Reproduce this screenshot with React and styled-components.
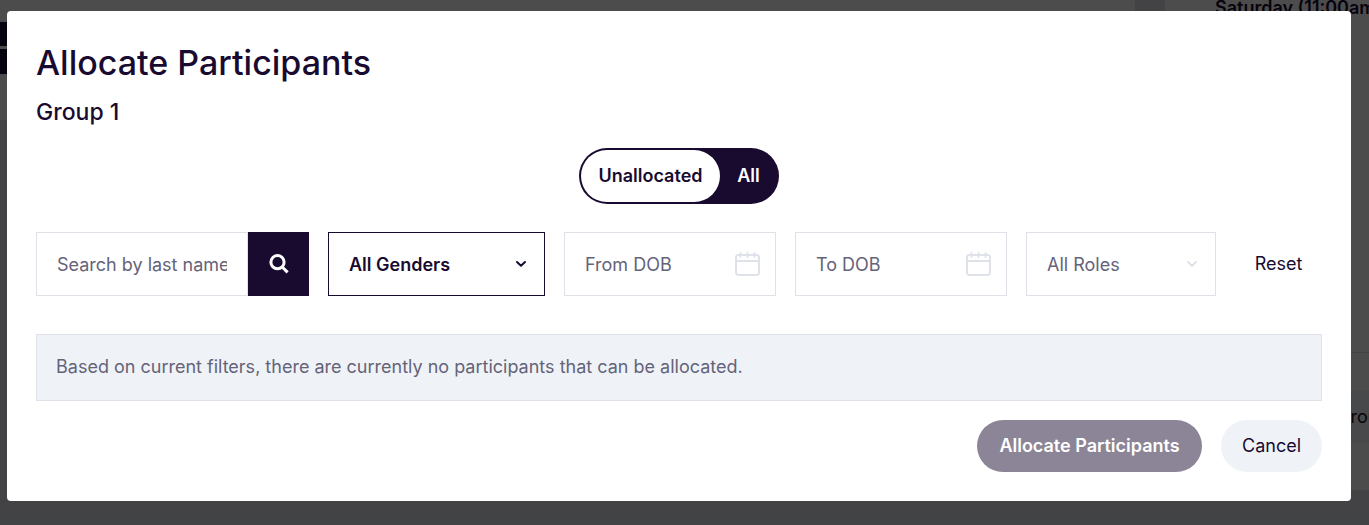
import React from "react";
import styled, { createGlobalStyle, css } from "styled-components";

const ink = "#190b30";
const line = "#dfe3e9";
const muted = "#656379";
const mist = "#eff3f8";

const GlobalStyle = createGlobalStyle`
  *, *::before, *::after { box-sizing: border-box; }
  html, body, #root { min-height: 100vh; }
  body {
    margin: 0;
    background: #eef0f3;
    color: ${ink};
    font-family: Inter, "Liberation Sans", sans-serif;
    font-size: 18px;
    line-height: 24px;
  }
  button, input, select { font: inherit; color: inherit; margin: 0; }
`;

const Page = styled.div`
  position: relative;
  min-height: 100vh;
  overflow: hidden;
  display: flex;
`;

const Backdrop = styled.div`
  position: absolute;
  inset: 0;
  display: flex;
  gap: 30px;
  background: #dfe2e6;
`;

const Schedule = styled.div`
  flex: 1;
  height: 120px;
  padding-top: 22px;
  background: #fff;
`;

const Tools = styled.div`
  display: flex;
  flex-direction: column;
  gap: 3px;
  width: 60px;
`;

const Tool = styled.div`
  height: ${(p) => (p.$tall ? 25 : 24)}px;
  background: ${ink};
`;

const Details = styled.div`
  width: 204px;
  height: 490px;
  overflow: hidden;
  background: #fff;
  white-space: nowrap;
  display: flex;
  flex-direction: column;
  justify-content: space-between;
`;

const Session = styled.h3`
  margin: -4px 0 0;
  padding-left: 50px;
  font-size: 18px;
  line-height: 24px;
  font-weight: 600;
`;

const Roster = styled.div`
  height: 138px;
  padding-top: 38px;
  border-top: 1px solid ${line};
`;

const RosterRow = styled.div`
  padding: 14px 0 14px 172px;
  background: ${mist};
`;

const Overlay = styled.div`
  position: relative;
  flex: 1;
  padding: 11px 18px 24px 7px;
  background: rgba(0, 0, 0, 0.7);
`;

const Dialog = styled.section`
  padding: 31px 29px 29px;
  border-radius: 4px;
  background: #fff;
`;

const Title = styled.h1`
  margin: 0;
  font-size: 34px;
  line-height: 42px;
  font-weight: 500;
`;

const Subtitle = styled.h2`
  margin: 12px 0 20px;
  font-size: 23px;
  line-height: 32px;
  font-weight: 500;
`;

const Toggle = styled.div`
  display: flex;
  width: 200px;
  height: 56px;
  margin: 0 auto 28px;
  padding: 2px;
  border-radius: 28px;
  background: ${ink};
`;

const ToggleOption = styled.button`
  flex: ${(p) => (p.$active ? "0 0 139px" : "1")};
  padding: 0;
  border: 0;
  border-radius: 26px;
  background: ${(p) => (p.$active ? "#fff" : "transparent")};
  color: ${(p) => (p.$active ? ink : "#fff")};
  font-weight: 600;
`;

const Filters = styled.form`
  display: flex;
  gap: 19px;
  margin-bottom: 38px;
`;

const Field = styled.div`
  position: relative;
  display: flex;
  flex: ${(p) => p.$grow} 1 0;
  min-width: 0;
  height: 64px;
`;

const control = css`
  width: 100%;
  min-width: 0;
  height: 100%;
  padding: 0 20px;
  border: 1px solid ${(p) => (p.$strong ? ink : line)};
  border-radius: 0;
  background: #fff;
  color: ${(p) => (p.$strong ? ink : muted)};
  font-weight: ${(p) => (p.$strong ? 600 : 400)};
  outline: 0;
`;

const TextInput = styled.input`
  ${control}
  &::placeholder { color: ${muted}; opacity: 1; }
`;

const Select = styled.select`
  ${control}
  padding-top: 2px;
  appearance: none;
`;

const SearchButton = styled.button`
  display: grid;
  place-items: center;
  flex: 0 0 61px;
  border: 0;
  background: ${ink};
  color: #fff;
`;

const FieldIcon = styled.svg`
  position: absolute;
  top: 50%;
  right: ${(p) => (p.$wide ? 15 : 18)}px;
  transform: translateY(-50%);
  color: ${(p) => (p.$strong ? ink : line)};
  pointer-events: none;
`;

const ResetButton = styled.button`
  flex: 0 0 87px;
  padding: 0;
  border: 0;
  background: transparent;
`;

const Notice = styled.p`
  margin: 0 0 19px;
  padding: 20px 19px 21px;
  border: 1px solid ${line};
  background: ${mist};
  color: ${muted};
`;

const Actions = styled.div`
  display: flex;
  justify-content: flex-end;
  gap: 19px;
`;

const PillButton = styled.button`
  height: 52px;
  min-width: ${(p) => (p.$primary ? 225 : 101)}px;
  padding: 0 12px;
  border: 0;
  border-radius: 26px;
  background: ${(p) => (p.$primary ? "#8c8597" : mist)};
  color: ${(p) => (p.$primary ? "#fff" : ink)};
  font-weight: ${(p) => (p.$primary ? 600 : 400)};
`;

function Chevron({ strong }) {
  return (
    <FieldIcon $strong={strong} width="12" height="8" viewBox="0 0 12 8" fill="none" stroke="currentColor" strokeWidth="2" strokeLinecap="round" strokeLinejoin="round" aria-hidden="true">
      <path d="M2 2 L6 5.7 L10 2" />
    </FieldIcon>
  );
}

function Calendar() {
  return (
    <FieldIcon $wide width="26" height="24" viewBox="0 0 26 24" fill="none" stroke="currentColor" strokeWidth="2" aria-hidden="true">
      <rect x="1" y="3" width="23" height="20" rx="2.4" />
      <path d="M1 9H24" />
      <path d="M5.5 1V5M12.5 1V5M19.5 1V5" strokeWidth="1.8" strokeLinecap="round" />
    </FieldIcon>
  );
}

function DateField({ label }) {
  return (
    <Field $grow={212}>
      <TextInput type="text" placeholder={label} aria-label={label} />
      <Calendar />
    </Field>
  );
}

function SelectField({ label, option, strong, grow }) {
  return (
    <Field $grow={grow}>
      <Select $strong={strong} aria-label={label}>
        <option>{option}</option>
      </Select>
      <Chevron strong={strong} />
    </Field>
  );
}

export default function App() {
  return (
    <>
      <GlobalStyle />
      <Page>
        <Backdrop aria-hidden="true">
          <Schedule>
            <Tools>
              <Tool />
              <Tool $tall />
            </Tools>
          </Schedule>
          <Details>
            <Session>Saturday (11:00am)</Session>
            <Roster>
              <RosterRow>Group 1</RosterRow>
            </Roster>
          </Details>
        </Backdrop>
        <Overlay>
          <Dialog role="dialog" aria-modal="true" aria-labelledby="dialog-title">
            <Title id="dialog-title">Allocate Participants</Title>
            <Subtitle>Group 1</Subtitle>
            <Toggle role="group" aria-label="Participants shown">
              <ToggleOption type="button" $active aria-pressed="true">Unallocated</ToggleOption>
              <ToggleOption type="button" aria-pressed="false">All</ToggleOption>
            </Toggle>
            <Filters onSubmit={(e) => e.preventDefault()}>
              <Field $grow={273}>
                <TextInput type="text" placeholder="Search by last name" aria-label="Search by last name" />
                <SearchButton type="submit" aria-label="Search">
                  <svg width="20" height="20" viewBox="0 0 20 20" fill="none" stroke="currentColor" strokeWidth="3" aria-hidden="true">
                    <circle cx="8.5" cy="8.2" r="6.6" />
                    <path d="M13.2 13L18.6 18.4" />
                  </svg>
                </SearchButton>
              </Field>
              <SelectField label="Gender" option="All Genders" strong grow={217} />
              <DateField label="From DOB" />
              <DateField label="To DOB" />
              <SelectField label="Role" option="All Roles" grow={190} />
              <ResetButton type="reset">Reset</ResetButton>
            </Filters>
            <Notice>Based on current filters, there are currently no participants that can be allocated.</Notice>
            <Actions>
              <PillButton type="button" $primary>Allocate Participants</PillButton>
              <PillButton type="button">Cancel</PillButton>
            </Actions>
          </Dialog>
        </Overlay>
      </Page>
    </>
  );
}
